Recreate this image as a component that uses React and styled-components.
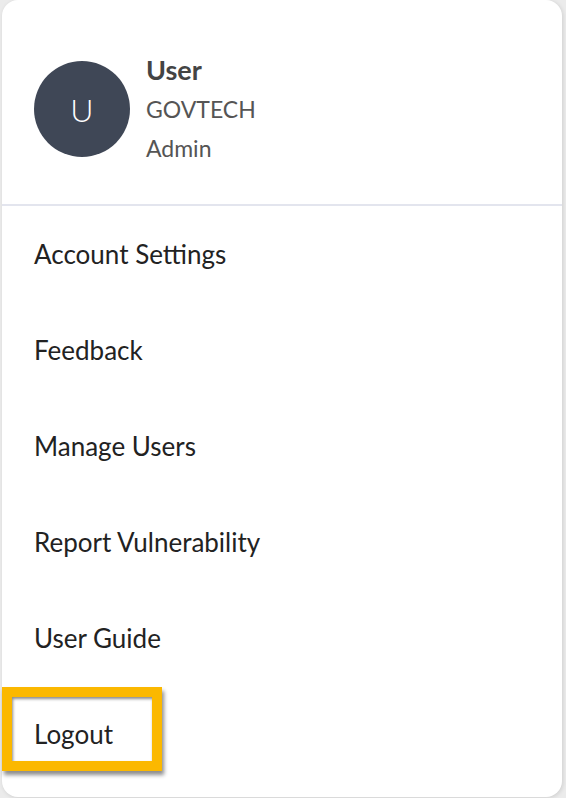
import React from 'react';
import styled, { createGlobalStyle } from 'styled-components';

const GlobalStyle = createGlobalStyle`
  html, body {
    margin: 0;
    padding: 0;
    background: #ebebeb;
  }
  body {
    font-family: Lato, "Liberation Sans", sans-serif;
  }
`;

const Page = styled.div`
  width: 566px;
  height: 798px;
  padding: 0 4px 1px 2px;
  box-sizing: border-box;
  overflow: hidden;
`;

const Card = styled.div`
  position: relative;
  height: 797px;
  background: #ffffff;
  border-radius: 16px;
  box-shadow: 1px 1px 4px rgba(0, 0, 0, 0.12);
  display: flex;
  flex-direction: column;
`;

const Profile = styled.div`
  display: flex;
  align-items: center;
  gap: 16px;
  height: 190px;
  padding: 14px 32px 0;
  border-bottom: 2px solid #e3e5ee;
`;

const Avatar = styled.div`
  width: 96px;
  height: 96px;
  border-radius: 50%;
  background: #3f4756;
  color: #ffffff;
  display: flex;
  align-items: center;
  justify-content: center;
  font-size: 32px;
  font-weight: 300;
  flex-shrink: 0;
`;

const Details = styled.div`
  display: flex;
  flex-direction: column;
`;

const Name = styled.div`
  font-size: 27px;
  font-weight: 700;
  color: #444;
  line-height: 40px;
`;

const Meta = styled.div`
  font-size: 23px;
  color: #555;
  line-height: 39px;
`;

const Menu = styled.ul`
  list-style: none;
  margin: 0;
  padding: 0;
  display: flex;
  flex-direction: column;
`;

const Item = styled.li`
  position: relative;
  height: 96px;
  display: flex;
  align-items: center;
  padding-left: 32px;
  font-size: 26px;
  color: #222;
`;

const Highlight = styled.div`
  position: absolute;
  left: 0;
  top: 1px;
  width: 160px;
  height: 84px;
  box-sizing: border-box;
  border: 10px solid #fbb800;
  box-shadow: 2px 4px 4px rgba(0, 0, 0, 0.45), inset 1px 2px 3px rgba(0, 0, 0, 0.45);
  pointer-events: none;
`;

const items = [
  'Account Settings',
  'Feedback',
  'Manage Users',
  'Report Vulnerability',
  'User Guide',
  'Logout',
];

export default function App() {
  return (
    <Page>
      <GlobalStyle />
      <Card>
        <Profile>
          <Avatar>U</Avatar>
          <Details>
            <Name>User</Name>
            <Meta>GOVTECH</Meta>
            <Meta>Admin</Meta>
          </Details>
        </Profile>
        <Menu>
          {items.map(label => (
            <Item key={label}>
              {label}
              {label === 'Logout' && <Highlight />}
            </Item>
          ))}
        </Menu>
      </Card>
    </Page>
  );
}
